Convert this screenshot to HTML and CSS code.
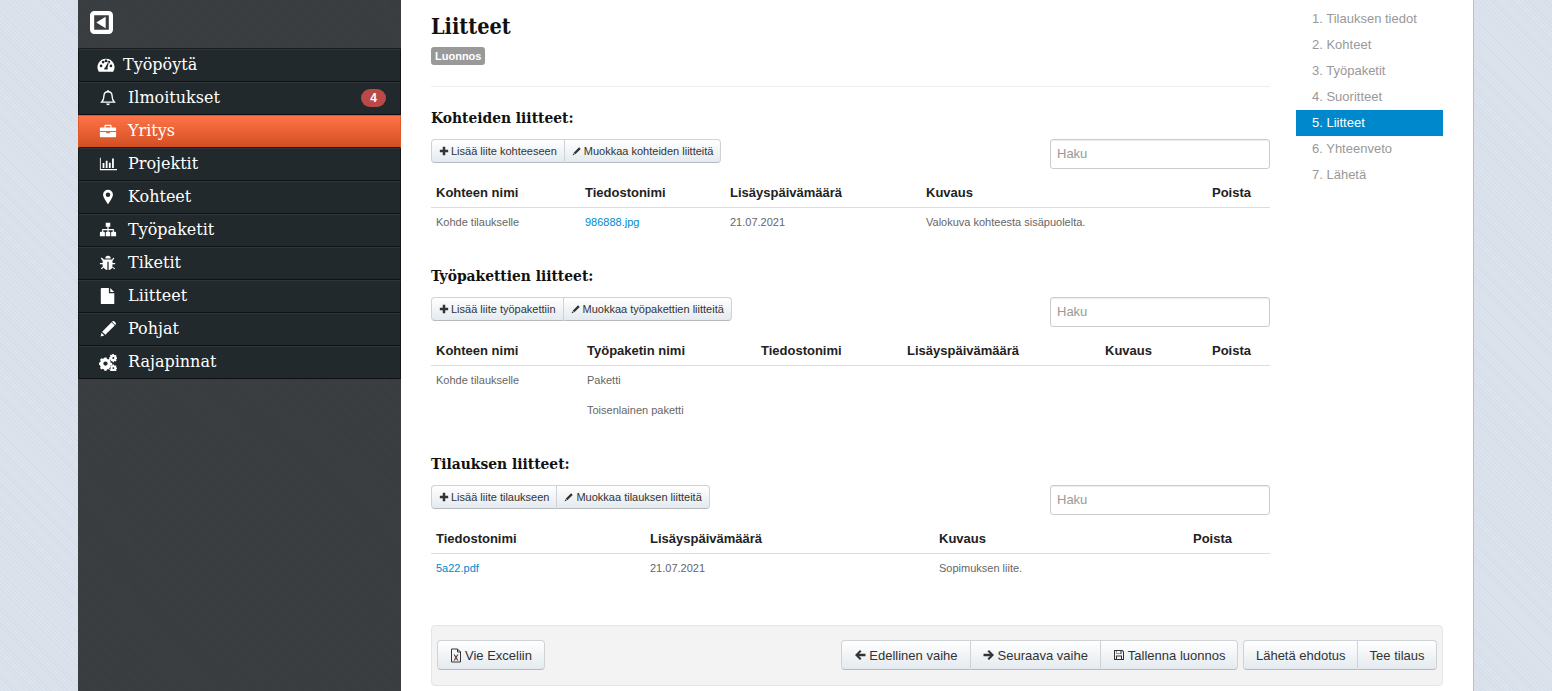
FILE: index.html
```html
<!DOCTYPE html>
<html lang="fi">
<head>
<meta charset="utf-8">
<title>Liitteet</title>
<link rel="stylesheet" href="styles.css">
</head>
<body>
<div class="shell">
  <aside class="sidebar">
    <div class="side-top">
      <svg class="collapse" viewBox="1 1 22 22"><path fill="#fff" fill-rule="evenodd" d="M5 1h14a4 4 0 0 1 4 4v14a4 4 0 0 1-4 4H5a4 4 0 0 1-4-4V5a4 4 0 0 1 4-4zm0 4v14h14V5zm11 1.500v11L7 12z"/></svg>
    </div>
    <nav class="side-nav">
      <a class="side-item first"><svg class="ico" viewBox="0 0 20 20"><path fill="#fff" fill-rule="evenodd" d="M10 3a9.500 9.500 0 0 0-8 14.500h16A9.500 9.500 0 0 0 10 3zM4.500 12.500a1.500 1.500 0 1 1 0-3 1.500 1.500 0 0 1 0 3zm2.300-4.200a1.500 1.500 0 1 1 0-3 1.500 1.500 0 0 1 0 3zM10 7a1.500 1.500 0 1 1 0-3 1.500 1.500 0 0 1 0 3zm1.700 8H8.300a2 2 0 0 1 .9-2.600L12.300 7l.9.300-1.500 5.700a2 2 0 0 1 0 2zm1.500-6.700a1.500 1.500 0 1 1 0-3 1.500 1.500 0 0 1 0 3zm2.300 4.200a1.500 1.500 0 1 1 0-3 1.500 1.500 0 0 1 0 3z"/></svg><span>Työpöytä</span></a>
      <a class="side-item"><svg class="ico" viewBox="0 0 20 20"><path fill="none" stroke="#fff" stroke-width="1.500" d="M10 3c-3 0-4.500 2-4.500 4.500 0 4-1 5.500-2.500 7h14c-1.500-1.500-2.500-3-2.500-7C14.500 5 13 3 10 3z"/><path fill="#fff" d="M8 16h4a2 2 0 0 1-4 0zM9 1.500h2V3H9z"/></svg><span>Ilmoitukset</span><b class="count">4</b></a>
      <a class="side-item active"><svg class="ico" viewBox="0 0 20 20"><path fill="#fff" fill-rule="evenodd" d="M7 3h6a1 1 0 0 1 1 1v2h4a1 1 0 0 1 1 1v3H1V7a1 1 0 0 1 1-1h4V4a1 1 0 0 1 1-1zm.500 1.500V6h5V4.500zM1 11h7v1.500h4V11h7v5a1 1 0 0 1-1 1H2a1 1 0 0 1-1-1z"/></svg><span>Yritys</span></a>
      <a class="side-item"><svg class="ico" viewBox="0 0 20 20"><path fill="#fff" d="M1 3h1v12.500h18V17H1zM4 9h2v5.500H4zM7.500 6.500h2v8h-2zM11 8.500h2v6h-2zM14.500 4h2v10.500h-2z"/></svg><span>Projektit</span></a>
      <a class="side-item"><svg class="ico" viewBox="0 0 20 20"><path fill="#fff" fill-rule="evenodd" d="M10 2a5.500 5.500 0 0 0-5.500 5.500c0 2.800 4 8.500 5.500 10.500 1.500-2 5.500-7.700 5.500-10.500A5.500 5.500 0 0 0 10 2zm0 8a2.500 2.500 0 1 1 0-5 2.500 2.500 0 0 1 0 5z"/></svg><span>Kohteet</span></a>
      <a class="side-item"><svg class="ico" viewBox="0 0 20 20"><path fill="#fff" d="M7.500 2h5v4.500h-1.800v2.500H16.500v3h1.500a1 1 0 0 1 1 1V17H13.500v-4a1 1 0 0 1 1-1h.8v-1.800h-4.600V12h.8a1 1 0 0 1 1 1v4H7.500v-4a1 1 0 0 1 1-1h1V10.200H4.700V12h.8a1 1 0 0 1 1 1v4H1v-4a1 1 0 0 1 1-1h1.500V9h5.800V6.500H7.500z"/></svg><span>Työpaketit</span></a>
      <a class="side-item"><svg class="ico" viewBox="0 0 20 20"><path fill="#fff" d="M7 5a3 3 0 0 1 6 0zM5.500 6h9l1.500-2 1 1-2 2.500V10h3v1.500h-3c0 1 0 1.500-.3 2.300L18 16l-1 1-2.200-2c-.8 1.500-2.300 2.500-4.100 2.700V8.500H9.300v9.200C7.500 17.500 6 16.500 5.200 15L3 17l-1-1 2.300-2.200c-.3-.8-.3-1.300-.3-2.300H1V10h3V7.500L2 5l1-1z"/></svg><span>Tiketit</span></a>
      <a class="side-item"><svg class="ico" viewBox="0 0 20 20"><path fill="#fff" d="M3 1h8v6h6v11a1 1 0 0 1-1 1H3a1 1 0 0 1-1-1V2a1 1 0 0 1 1-1zM12.500 1.200 16.800 5.500h-4.300z"/></svg><span>Liitteet</span></a>
      <a class="side-item"><svg class="ico" viewBox="0 0 20 20"><path fill="#fff" d="M14 2.500 17.500 6 7 16.500 3.500 13zM2.800 14.200l3 3-4 1zM15 1.500a1.500 1.500 0 0 1 2 0l1.500 1.500a1.500 1.500 0 0 1 0 2L18 5.500 14.500 2z"/></svg><span>Pohjat</span></a>
      <a class="side-item"><svg class="ico" viewBox="0 0 20 20"><path fill="#fff" fill-rule="evenodd" d="M6 5h2.400l.4 1.500 1.400.6 1.400-.8 1.700 1.700-.8 1.400.6 1.400 1.500.4v2.400l-1.500.4-.6 1.400.8 1.400-1.700 1.700-1.400-.8-1.400.6-.4 1.300H6l-.4-1.400-1.400-.6-1.400.8-1.700-1.700.8-1.400-.6-1.400L0 13v-2.400l1.300-.4.6-1.400-.8-1.400 1.700-1.700 1.400.8 1.400-.6zM7.200 9.400a2.400 2.400 0 1 0 0 4.800 2.400 2.400 0 0 0 0-4.800zM15.500 1l1 .2.300 1 .9.400.9-.5.900.9-.5.900.4.900 1 .3v1.300l-1 .3-.4.900.5.900-.9.900-.9-.5-.9.400-.3 1h-1.300l-.3-1-.9-.4-.9.500-.9-.9.500-.9-.4-.9-1-.3V4.700l1-.3.400-.9-.5-.9.900-.9.900.5.900-.4.300-1zm.4 3.500a1 1 0 1 0 0 2.200 1 1 0 0 0 0-2.200zM15.500 12.500l1 .2.300 1 .9.400.9-.5.900.9-.5.900.4.900 1 .3v.9l-1 .3-.4.900.5.900-.9.900-.9-.5-.9.400-.3.500h-1.300l-.3-.5-.9-.4-.9.500-.9-.9.500-.9-.4-.9-1-.3v-.9l1-.3.400-.9-.5-.9.900-.9.900.5.900-.4.300-1zm.4 3.300a1 1 0 1 0 0 2 1 1 0 0 0 0-2z"/></svg><span>Rajapinnat</span></a>
    </nav>
  </aside>

  <main class="main">
    <div class="columns">
      <div class="content">
        <h1 class="page-title">Liitteet</h1>
        <span class="status">Luonnos</span>
        <hr class="rule">

        <section class="section">
          <h2 class="section-title">Kohteiden liitteet:</h2>
          <div class="toolbar">
            <div class="btn-group small">
              <a class="btn"><svg class="bi" viewBox="0 0 12 12"><path d="M4.500 1h3v3.500H11v3H7.500V11h-3V7.500H1v-3h3.500z"/></svg>Lisää liite kohteeseen</a>
              <a class="btn"><svg class="bi" viewBox="0 0 12 12"><path d="M8.500 1.500l2 2L4 10 2 8zM1.500 8.700l1.800 1.800-2.500.7z"/></svg>Muokkaa kohteiden liitteitä</a>
            </div>
            <input class="search" type="text" placeholder="Haku">
          </div>
          <table class="grid t1">
            <colgroup><col class="c149"><col class="c145"><col class="c196"><col class="c286"><col></colgroup>
            <thead><tr><th>Kohteen nimi</th><th>Tiedostonimi</th><th>Lisäyspäivämäärä</th><th>Kuvaus</th><th>Poista</th></tr></thead>
            <tbody><tr><td>Kohde tilaukselle</td><td><a class="link">986888.jpg</a></td><td>21.07.2021</td><td>Valokuva kohteesta sisäpuolelta.</td><td></td></tr></tbody>
          </table>
        </section>

        <section class="section">
          <h2 class="section-title">Työpakettien liitteet:</h2>
          <div class="toolbar">
            <div class="btn-group small">
              <a class="btn"><svg class="bi" viewBox="0 0 12 12"><path d="M4.500 1h3v3.500H11v3H7.500V11h-3V7.500H1v-3h3.500z"/></svg>Lisää liite työpakettiin</a>
              <a class="btn"><svg class="bi" viewBox="0 0 12 12"><path d="M8.500 1.500l2 2L4 10 2 8zM1.500 8.700l1.800 1.800-2.500.7z"/></svg>Muokkaa työpakettien liitteitä</a>
            </div>
            <input class="search" type="text" placeholder="Haku">
          </div>
          <table class="grid t2">
            <colgroup><col class="c151"><col class="c174"><col class="c146"><col class="c198"><col class="c107"><col></colgroup>
            <thead><tr><th>Kohteen nimi</th><th>Työpaketin nimi</th><th>Tiedostonimi</th><th>Lisäyspäivämäärä</th><th>Kuvaus</th><th>Poista</th></tr></thead>
            <tbody>
              <tr><td>Kohde tilaukselle</td><td>Paketti</td><td></td><td></td><td></td><td></td></tr>
              <tr><td></td><td>Toisenlainen paketti</td><td></td><td></td><td></td><td></td></tr>
            </tbody>
          </table>
        </section>

        <section class="section">
          <h2 class="section-title">Tilauksen liitteet:</h2>
          <div class="toolbar">
            <div class="btn-group small">
              <a class="btn"><svg class="bi" viewBox="0 0 12 12"><path d="M4.500 1h3v3.500H11v3H7.500V11h-3V7.500H1v-3h3.500z"/></svg>Lisää liite tilaukseen</a>
              <a class="btn"><svg class="bi" viewBox="0 0 12 12"><path d="M8.500 1.500l2 2L4 10 2 8zM1.500 8.700l1.800 1.800-2.500.7z"/></svg>Muokkaa tilauksen liitteitä</a>
            </div>
            <input class="search" type="text" placeholder="Haku">
          </div>
          <table class="grid t3">
            <colgroup><col class="c214"><col class="c289"><col class="c254"><col></colgroup>
            <thead><tr><th>Tiedostonimi</th><th>Lisäyspäivämäärä</th><th>Kuvaus</th><th>Poista</th></tr></thead>
            <tbody><tr><td><a class="link">5a22.pdf</a></td><td>21.07.2021</td><td>Sopimuksen liite.</td><td></td></tr></tbody>
          </table>
        </section>
      </div>

      <ol class="steps">
        <li class="step">1. Tilauksen tiedot</li>
        <li class="step">2. Kohteet</li>
        <li class="step">3. Työpaketit</li>
        <li class="step">4. Suoritteet</li>
        <li class="step current">5. Liitteet</li>
        <li class="step">6. Yhteenveto</li>
        <li class="step">7. Lähetä</li>
      </ol>
    </div>

    <div class="actions">
      <a class="btn solo"><svg class="bi wide" viewBox="0 0 12 14"><path fill="none" stroke="#333" d="M1.500.5h6l3 3v10h-9z"/><path fill="none" stroke="#333" d="M7.500.5v3h3"/><path fill="#633" d="M3.500 6h1.300l1.200 2 1.200-2h1.300L6.700 9l1.700 3H7.100L6 10 4.900 12H3.600l1.700-3z"/></svg>Vie Exceliin</a>
      <div class="action-right">
        <div class="btn-group">
          <a class="btn"><svg class="bi" viewBox="0 0 12 12"><path d="M6 1l1.500 1.500L5 4.800h6.500v2.400H5l2.500 2.300L6 11 1 6z"/></svg>Edellinen vaihe</a>
          <a class="btn"><svg class="bi" viewBox="0 0 12 12"><path d="M6 1 4.500 2.500 7 4.800H.5v2.400H7L4.500 9.500 6 11l5-5z"/></svg>Seuraava vaihe</a>
          <a class="btn"><svg class="bi" viewBox="0 0 12 12"><path fill-rule="evenodd" d="M1 1h8.500L11 2.500V11H1zm1 1v8h1V6.500h6V10h1V3L9 2h-.5v3h-5V2zm2 0v2.500h3.500V2zM4 7.500V10h4V7.500z"/></svg>Tallenna luonnos</a>
        </div>
        <div class="btn-group">
          <a class="btn plain">Lähetä ehdotus</a>
          <a class="btn plain">Tee tilaus</a>
        </div>
      </div>
    </div>
  </main>
</div>
</body>
</html>
```

FILE: styles.css
```css
* { box-sizing: border-box; }
html, body { margin: 0; height: 691px; overflow: hidden; }
body {
  background-color: #d8e0ea;
  background-image: repeating-linear-gradient(45deg, #d4dde8 0 1px, #dce3ec 1px 3px);
  font-family: "Liberation Sans", Arial, sans-serif;
  color: #333;
}
.shell {
  display: flex;
  width: 1396px;
  height: 691px;
  margin-left: 78px;
  border-right: 1px solid #b9c0c9;
  background: #fff;
}

/* Sidebar */
.sidebar {
  width: 323px;
  flex: none;
  background-color: #3a3d3f;
  background-image: repeating-linear-gradient(45deg, rgba(255,255,255,.012) 0 1px, transparent 1px 2px),
    repeating-linear-gradient(-45deg, rgba(0,0,0,.025) 0 1px, transparent 1px 2px);
}
.side-top { height: 48px; padding: 11px 0 0 12px; }
.collapse { display: block; width: 23px; height: 23px; }
.side-nav { display: block; border-top: 1px solid #1b1e20; }
.side-item {
  display: flex;
  align-items: center;
  height: 33px;
  padding: 0 14px 2px 20px;
  background: #22292c;
  border-left: 1px solid #14181a;
  border-right: 1px solid #14181a;
  border-bottom: 1px solid #0f1214;
  border-top: 1px solid #2f3538;
  color: #fff;
  font-family: "DejaVu Serif", "Liberation Serif", serif;
  font-size: 16px;
  line-height: 20px;
}
.side-item span { margin-left: 11px; flex: 1; }
.side-item.first { padding-left: 18px; }
.side-item.first span { margin-left: 8px; }
.side-item.active {
  background: linear-gradient(#ff7348, #d24f22);
  border-color: #e0582a;
  border-left-color: #e0582a;
  border-bottom-color: #1a1a1a;
}
.ico { width: 18px; height: 18px; flex: none; }
.count {
  width: 25px;
  height: 18px;
  border-radius: 9px;
  background: #b94a48;
  color: #fff;
  font: bold 12px/18px "Liberation Sans", Arial, sans-serif;
  text-align: center;
}

/* Main */
.main { flex: 1; padding: 0 30px; min-width: 0; }
.columns { display: flex; gap: 26px; height: 625px; }
.content { width: 839px; flex: none; }
.page-title {
  margin: 0;
  padding-top: 13px;
  font-family: "DejaVu Serif Condensed", "DejaVu Serif", serif;
  font-stretch: condensed;
  font-size: 21.500px;
  line-height: 28px;
  font-weight: bold;
  color: #111;
}
.status {
  display: inline-block;
  margin-top: 6px;
  height: 18px;
  padding: 0 4px;
  border-radius: 3px;
  background: #999;
  color: #fff;
  font-size: 11px;
  font-weight: bold;
  line-height: 18px;
  vertical-align: top;
}
.rule { margin: 21px 0 0; border: 0; border-top: 1px solid #eee; }
.section-title {
  margin: 0;
  font-family: "DejaVu Serif Condensed", "DejaVu Serif", serif;
  font-stretch: condensed;
  font-size: 15.400px;
  line-height: 20px;
  font-weight: bold;
  color: #111;
}
.section { padding-top: 21px; }
.section + .section { padding-top: 29px; }
.toolbar { display: flex; justify-content: space-between; align-items: flex-start; margin-top: 11px; }
.search {
  width: 220px;
  height: 30px;
  padding: 3px 6px 5px;
  border: 1px solid #ccc;
  border-radius: 3px;
  box-shadow: inset 0 1px 1px rgba(0,0,0,.075);
  font: 13px "Liberation Sans", Arial, sans-serif;
  color: #555;
}
.search::placeholder { color: #999; }

.btn-group { display: flex; }
.btn {
  display: flex;
  align-items: center;
  height: 30px;
  padding: 0 12px;
  border: 1px solid #cfd3d6;
  border-bottom-color: #b5babf;
  border-left-width: 0;
  background: linear-gradient(#fff, #e4eaef);
  color: #333;
  font-size: 13px;
  white-space: nowrap;
}
.btn-group .btn:first-child { border-left-width: 1px; border-radius: 4px 0 0 4px; }
.btn-group .btn:last-child { border-radius: 0 4px 4px 0; }
.btn.solo { border-left-width: 1px; border-radius: 4px; }
.small .btn { height: 24px; padding: 0 7px; font-size: 11px; }
.bi { width: 12px; height: 12px; margin-right: 3px; flex: none; fill: #333; }
.small .bi { width: 10px; height: 10px; margin-right: 2px; }
.bi.wide { width: 12px; height: 15px; margin-right: 3px; }
.btn.plain { padding: 0 11.500px; }

/* Tables */
.grid { width: 100%; margin-top: 9px; border-collapse: collapse; table-layout: fixed; font-size: 11px; color: #666; }
.grid th {
  height: 29px;
  padding: 0 5px;
  border-bottom: 1px solid #ddd;
  color: #222;
  font-size: 13px;
  font-weight: bold;
  text-align: left;
}
.grid td { height: 30px; padding: 0 5px; vertical-align: middle; }
.link { color: #0088cc; }
.c149 { width: 149px; } .c145 { width: 145px; } .c196 { width: 196px; } .c286 { width: 286px; }
.c151 { width: 151px; } .c174 { width: 174px; } .c146 { width: 146px; } .c198 { width: 198px; } .c107 { width: 107px; }
.c214 { width: 214px; } .c289 { width: 289px; } .c254 { width: 254px; }

/* Steps */
.steps { list-style: none; margin: 6px 0 0; padding: 0; width: 147px; flex: none; }
.step { height: 26px; padding-left: 16px; color: #999; font-size: 13px; line-height: 26px; }
.step.current { background: #0088cc; color: #fff; }

/* Actions */
.actions {
  display: flex;
  justify-content: space-between;
  align-items: flex-start;
  height: 61px;
  padding: 14px 5px 0;
  background: #f3f3f3;
  border: 1px solid #e5e5e5;
  border-radius: 4px;
}
.action-right { display: flex; gap: 5px; }
```
